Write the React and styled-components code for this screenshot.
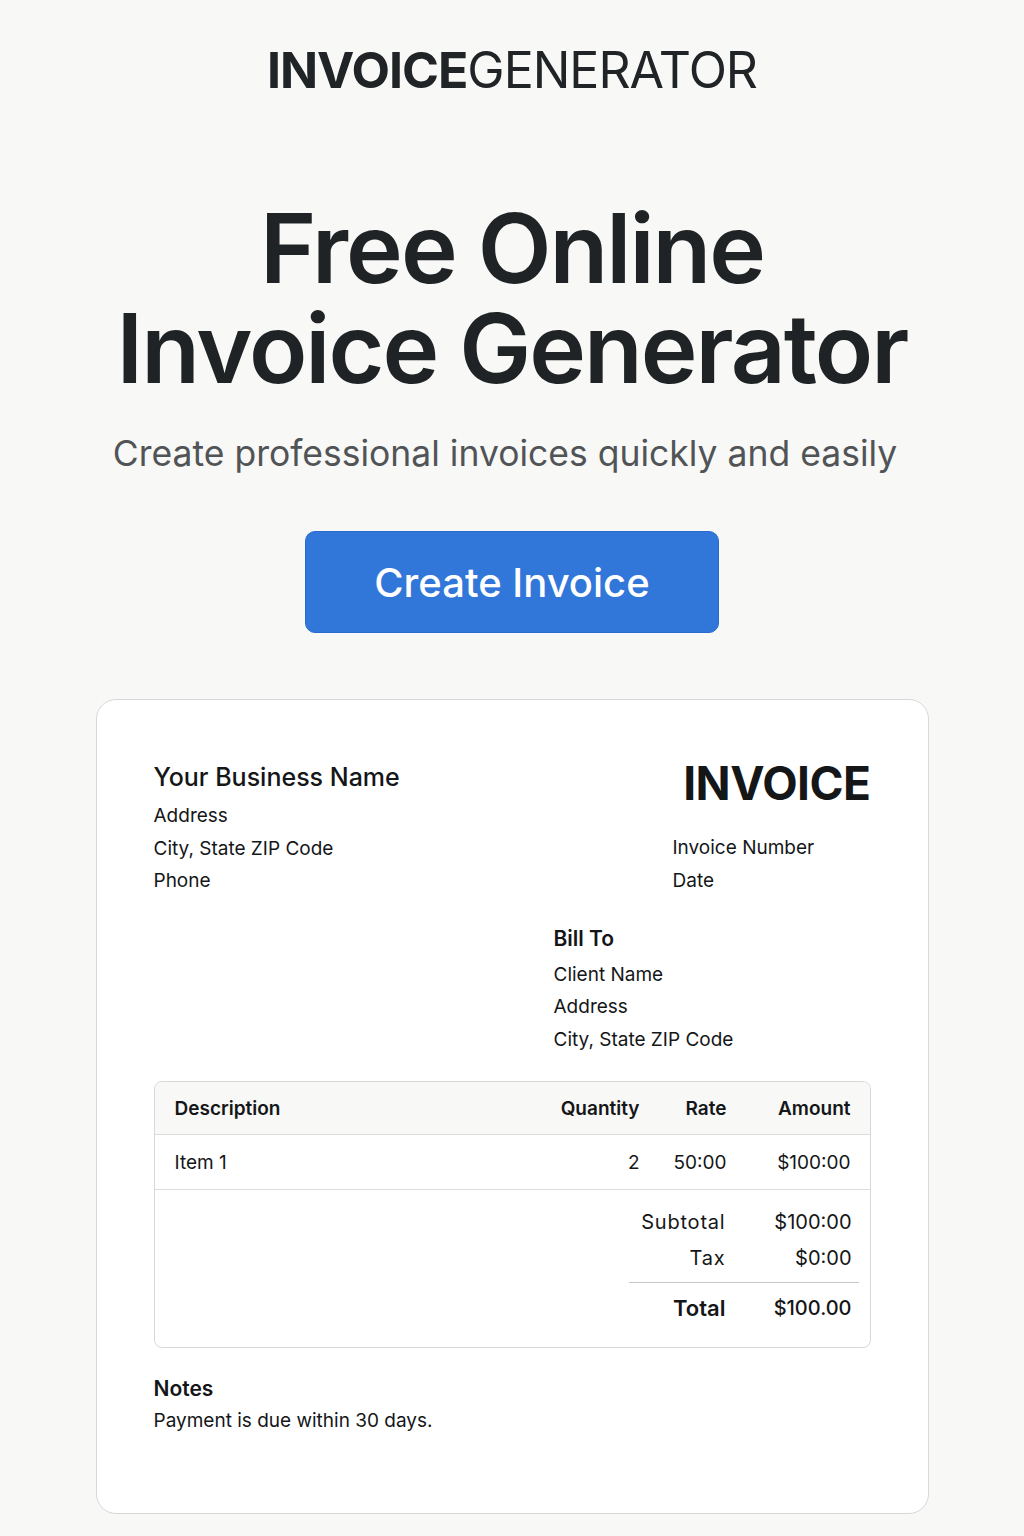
import React from "react";
import styled, { createGlobalStyle } from "styled-components";

const GlobalStyle = createGlobalStyle`
  body {
    margin: 0;
    background: #f8f8f6;
    font-family: Inter, "Noto Sans", sans-serif;
    color: #1f2326;
  }
`;

const Page = styled.div`
  display: flex;
  flex-direction: column;
  align-items: center;
  padding-top: 40px;
  padding-bottom: 20px;
`;

const Logo = styled.div`
  font-size: 50px;
  line-height: 60px;
  letter-spacing: -1px;
  color: #202426;
  b {
    font-weight: 700;
  }
  span {
    font-weight: 400;
  }
`;

const Title = styled.h1`
  margin: 98px 0 0;
  font-size: 96px;
  font-weight: 600;
  letter-spacing: -2px;
  text-align: center;
  color: #1f2326;
`;

const TitleLine = styled.span`
  display: block;
  height: 100px;
  line-height: 100px;
`;

const Subtitle = styled.p`
  margin: 34px 14px 0 0;
  font-size: 35.5px;
  line-height: 44px;
  color: #515457;
`;

const CreateButton = styled.button`
  margin-top: 55px;
  width: 414px;
  height: 102px;
  border: 1px solid #2a6bd0;
  border-radius: 10px;
  background: #3176d9;
  color: #fff;
  font-family: inherit;
  font-size: 40px;
  font-weight: 500;
  cursor: pointer;
`;

const Card = styled.div`
  margin-top: 66px;
  width: 833px;
  box-sizing: border-box;
  background: #fff;
  border: 1px solid #d8d8d8;
  border-radius: 20px;
  padding: 57px 57px 75px;
  color: #141618;
`;

const TopRow = styled.div`
  display: flex;
  justify-content: space-between;
`;

const Block = styled.div`
  display: flex;
  flex-direction: column;
  align-items: ${(p) => (p.$right ? "flex-end" : "flex-start")};
`;

const BizName = styled.div`
  font-size: 25px;
  line-height: 40px;
  font-weight: 500;
  margin-bottom: 3px;
`;

const Line = styled.div`
  font-size: 19px;
  line-height: 32.5px;
`;

const InvoiceWord = styled.div`
  font-size: 46px;
  line-height: 52px;
  font-weight: 700;
  letter-spacing: -0.5px;
  margin-bottom: 23px;
`;

const MetaList = styled.div`
  display: flex;
  flex-direction: column;
  width: 198px;
`;

const BillTo = styled.div`
  margin: 25px 0 0 400px;
`;

const Heading = styled.div`
  font-size: 21px;
  line-height: 32px;
  font-weight: 600;
  margin-bottom: ${(p) => p.$gap}px;
`;

const Table = styled.div`
  margin-top: 25px;
  border: 1px solid #d8d8d8;
  border-radius: 8px;
  overflow: hidden;
`;

const Row = styled.div`
  display: grid;
  grid-template-columns: 1fr 120px 87px 124px;
  align-items: center;
  height: ${(p) => p.$h}px;
  padding: 0 19px 0 20px;
  background: ${(p) => (p.$head ? "#f8f8f7" : "#fff")};
  border-bottom: 1px solid #dcdcdc;
  font-size: 19px;
  font-weight: ${(p) => (p.$head ? 600 : 400)};
`;

const Cell = styled.div`
  text-align: ${(p) => (p.$right ? "right" : "left")};
`;

const Totals = styled.div`
  width: 230px;
  margin: 14px 11px 14px auto;
`;

const TotalRow = styled.div`
  display: grid;
  grid-template-columns: 1fr 126px;
  height: ${(p) => p.$h || 36}px;
  align-items: center;
  padding-right: 7px;
  font-size: 20px;
  border-top: ${(p) => (p.$strong ? "1px solid #c8c8c8" : "none")};
  margin-top: ${(p) => (p.$strong ? 6 : 0)}px;
  text-align: right;
  span:first-child {
    font-size: ${(p) => (p.$strong ? 22 : 20)}px;
    font-weight: ${(p) => (p.$strong ? 600 : 400)};
    letter-spacing: ${(p) => (p.$strong ? 0 : 0.8)}px;
  }
  span:last-child {
    font-weight: ${(p) => (p.$strong ? 500 : 400)};
  }
`;

const Notes = styled.div`
  margin-top: 25px;
`;

export default function App() {
  return (
    <>
      <GlobalStyle />
      <Page>
        <Logo>
          <b>INVOICE</b>
          <span>GENERATOR</span>
        </Logo>
        <Title>
          <TitleLine>Free Online</TitleLine>
          <TitleLine>Invoice Generator</TitleLine>
        </Title>
        <Subtitle>Create professional invoices quickly and easily</Subtitle>
        <CreateButton>Create Invoice</CreateButton>

        <Card>
          <TopRow>
            <Block>
              <BizName>Your Business Name</BizName>
              <Line>Address</Line>
              <Line>City, State ZIP Code</Line>
              <Line>Phone</Line>
            </Block>
            <Block $right>
              <InvoiceWord>INVOICE</InvoiceWord>
              <MetaList>
                <Line>Invoice Number</Line>
                <Line>Date</Line>
              </MetaList>
            </Block>
          </TopRow>

          <BillTo>
            <Heading $gap={4}>Bill To</Heading>
            <Line>Client Name</Line>
            <Line>Address</Line>
            <Line>City, State ZIP Code</Line>
          </BillTo>

          <Table>
            <Row $head $h={52}>
              <Cell>Description</Cell>
              <Cell $right>Quantity</Cell>
              <Cell $right>Rate</Cell>
              <Cell $right>Amount</Cell>
            </Row>
            <Row $h={54}>
              <Cell>Item 1</Cell>
              <Cell $right>2</Cell>
              <Cell $right>50:00</Cell>
              <Cell $right>$100:00</Cell>
            </Row>
            <Totals>
              <TotalRow>
                <span>Subtotal</span>
                <span>$100:00</span>
              </TotalRow>
              <TotalRow>
                <span>Tax</span>
                <span>$0:00</span>
              </TotalRow>
              <TotalRow $strong $h={50}>
                <span>Total</span>
                <span>$100.00</span>
              </TotalRow>
            </Totals>
          </Table>

          <Notes>
            <Heading $gap={0}>Notes</Heading>
            <Line>Payment is due within 30 days.</Line>
          </Notes>
        </Card>
      </Page>
    </>
  );
}
